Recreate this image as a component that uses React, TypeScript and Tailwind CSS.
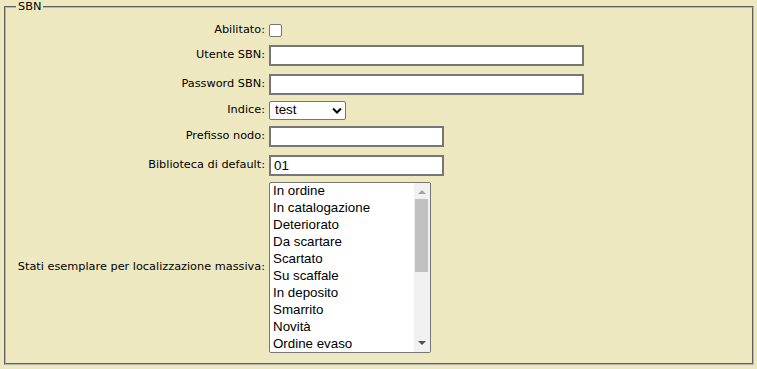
import * as React from "react"

const stati = [
  "In ordine",
  "In catalogazione",
  "Deteriorato",
  "Da scartare",
  "Scartato",
  "Su scaffale",
  "In deposito",
  "Smarrito",
  "Novità",
  "Ordine evaso",
]

function Row({ label, height, children }: { label: string; height: string; children: React.ReactNode }) {
  return (
    <div className={`flex items-center ${height}`}>
      <div className="w-[260px] shrink-0 text-right pr-[1px]">{label}</div>
      <div className="ml-[3px] flex items-center">{children}</div>
    </div>
  )
}

function TextBox({ width, value = "" }: { width: string; value?: string }) {
  return (
    <input
      type="text"
      readOnly
      defaultValue={value}
      className={`${width} h-[21px] border-2 border-[#767676] bg-white px-[3px] text-[13.33px] text-black outline-none [font-family:'Liberation_Sans',Arial,sans-serif]`}
    />
  )
}

export default function App() {
  return (
    <div className="min-h-screen bg-[#eee8c1] pt-0 text-[11.3px] text-black [font-family:'DejaVu_Sans',Verdana,sans-serif]">
      <fieldset className="ml-[4px] mr-[3px] border-2 border-[#b4b4b4] [border-style:groove] pt-[6px] pb-[7px]">
        <legend className="ml-[10px] px-[2px] leading-[14px]">SBN</legend>

        <Row label="Abilitato:" height="h-[21px]">
          <div className="h-[13px] w-[13px] rounded-[2px] border border-[#767676] bg-white" />
        </Row>

        <Row label="Utente SBN:" height="h-[29px]">
          <TextBox width="w-[315px]" />
        </Row>

        <Row label="Password SBN:" height="h-[29px]">
          <TextBox width="w-[315px]" />
        </Row>

        <Row label="Indice:" height="h-[22px]">
          <div className="flex h-[19px] w-[77px] items-center justify-between rounded-[2px] border border-[#767676] bg-white pl-[5px] pr-[3px] text-[13.33px] [font-family:'Liberation_Sans',Arial,sans-serif]">
            <span>test</span>
            <svg width="10" height="7" viewBox="0 0 10 7">
              <polyline points="1,1.5 5,5.5 9,1.5" fill="none" stroke="#000" strokeWidth="2" />
            </svg>
          </div>
        </Row>

        <Row label="Prefisso nodo:" height="h-[31px]">
          <TextBox width="w-[175px]" />
        </Row>

        <Row label="Biblioteca di default:" height="h-[27px]">
          <TextBox width="w-[175px]" value="01" />
        </Row>

        <Row label="Stati esemplare per localizzazione massiva:" height="h-[177px]">
          <div className="flex h-[171px] w-[162px] overflow-hidden rounded-[2px] border border-[#767676] bg-white text-[13.33px] [font-family:'Liberation_Sans',Arial,sans-serif]">
            <div className="flex-1">
              {stati.map((s) => (
                <div key={s} className="h-[17px] pl-[3px] leading-[16px] whitespace-nowrap">
                  {s}
                </div>
              ))}
            </div>
            <div className="flex w-[16px] flex-col bg-[#f1f1f1]">
              <div className="flex h-[16px] items-center justify-center">
                <svg width="8" height="5" viewBox="0 0 8 5">
                  <polygon points="0,5 4,1 8,5" fill="#a3a3a3" />
                </svg>
              </div>
              <div className="flex-1">
                <div className="ml-[1px] mr-[2px] h-[73px] bg-[#c1c1c1]" />
              </div>
              <div className="flex h-[17px] items-center justify-center">
                <svg width="8" height="5" viewBox="0 0 8 5">
                  <polygon points="0,0 8,0 4,4" fill="#505050" />
                </svg>
              </div>
            </div>
          </div>
        </Row>
      </fieldset>
    </div>
  )
}
